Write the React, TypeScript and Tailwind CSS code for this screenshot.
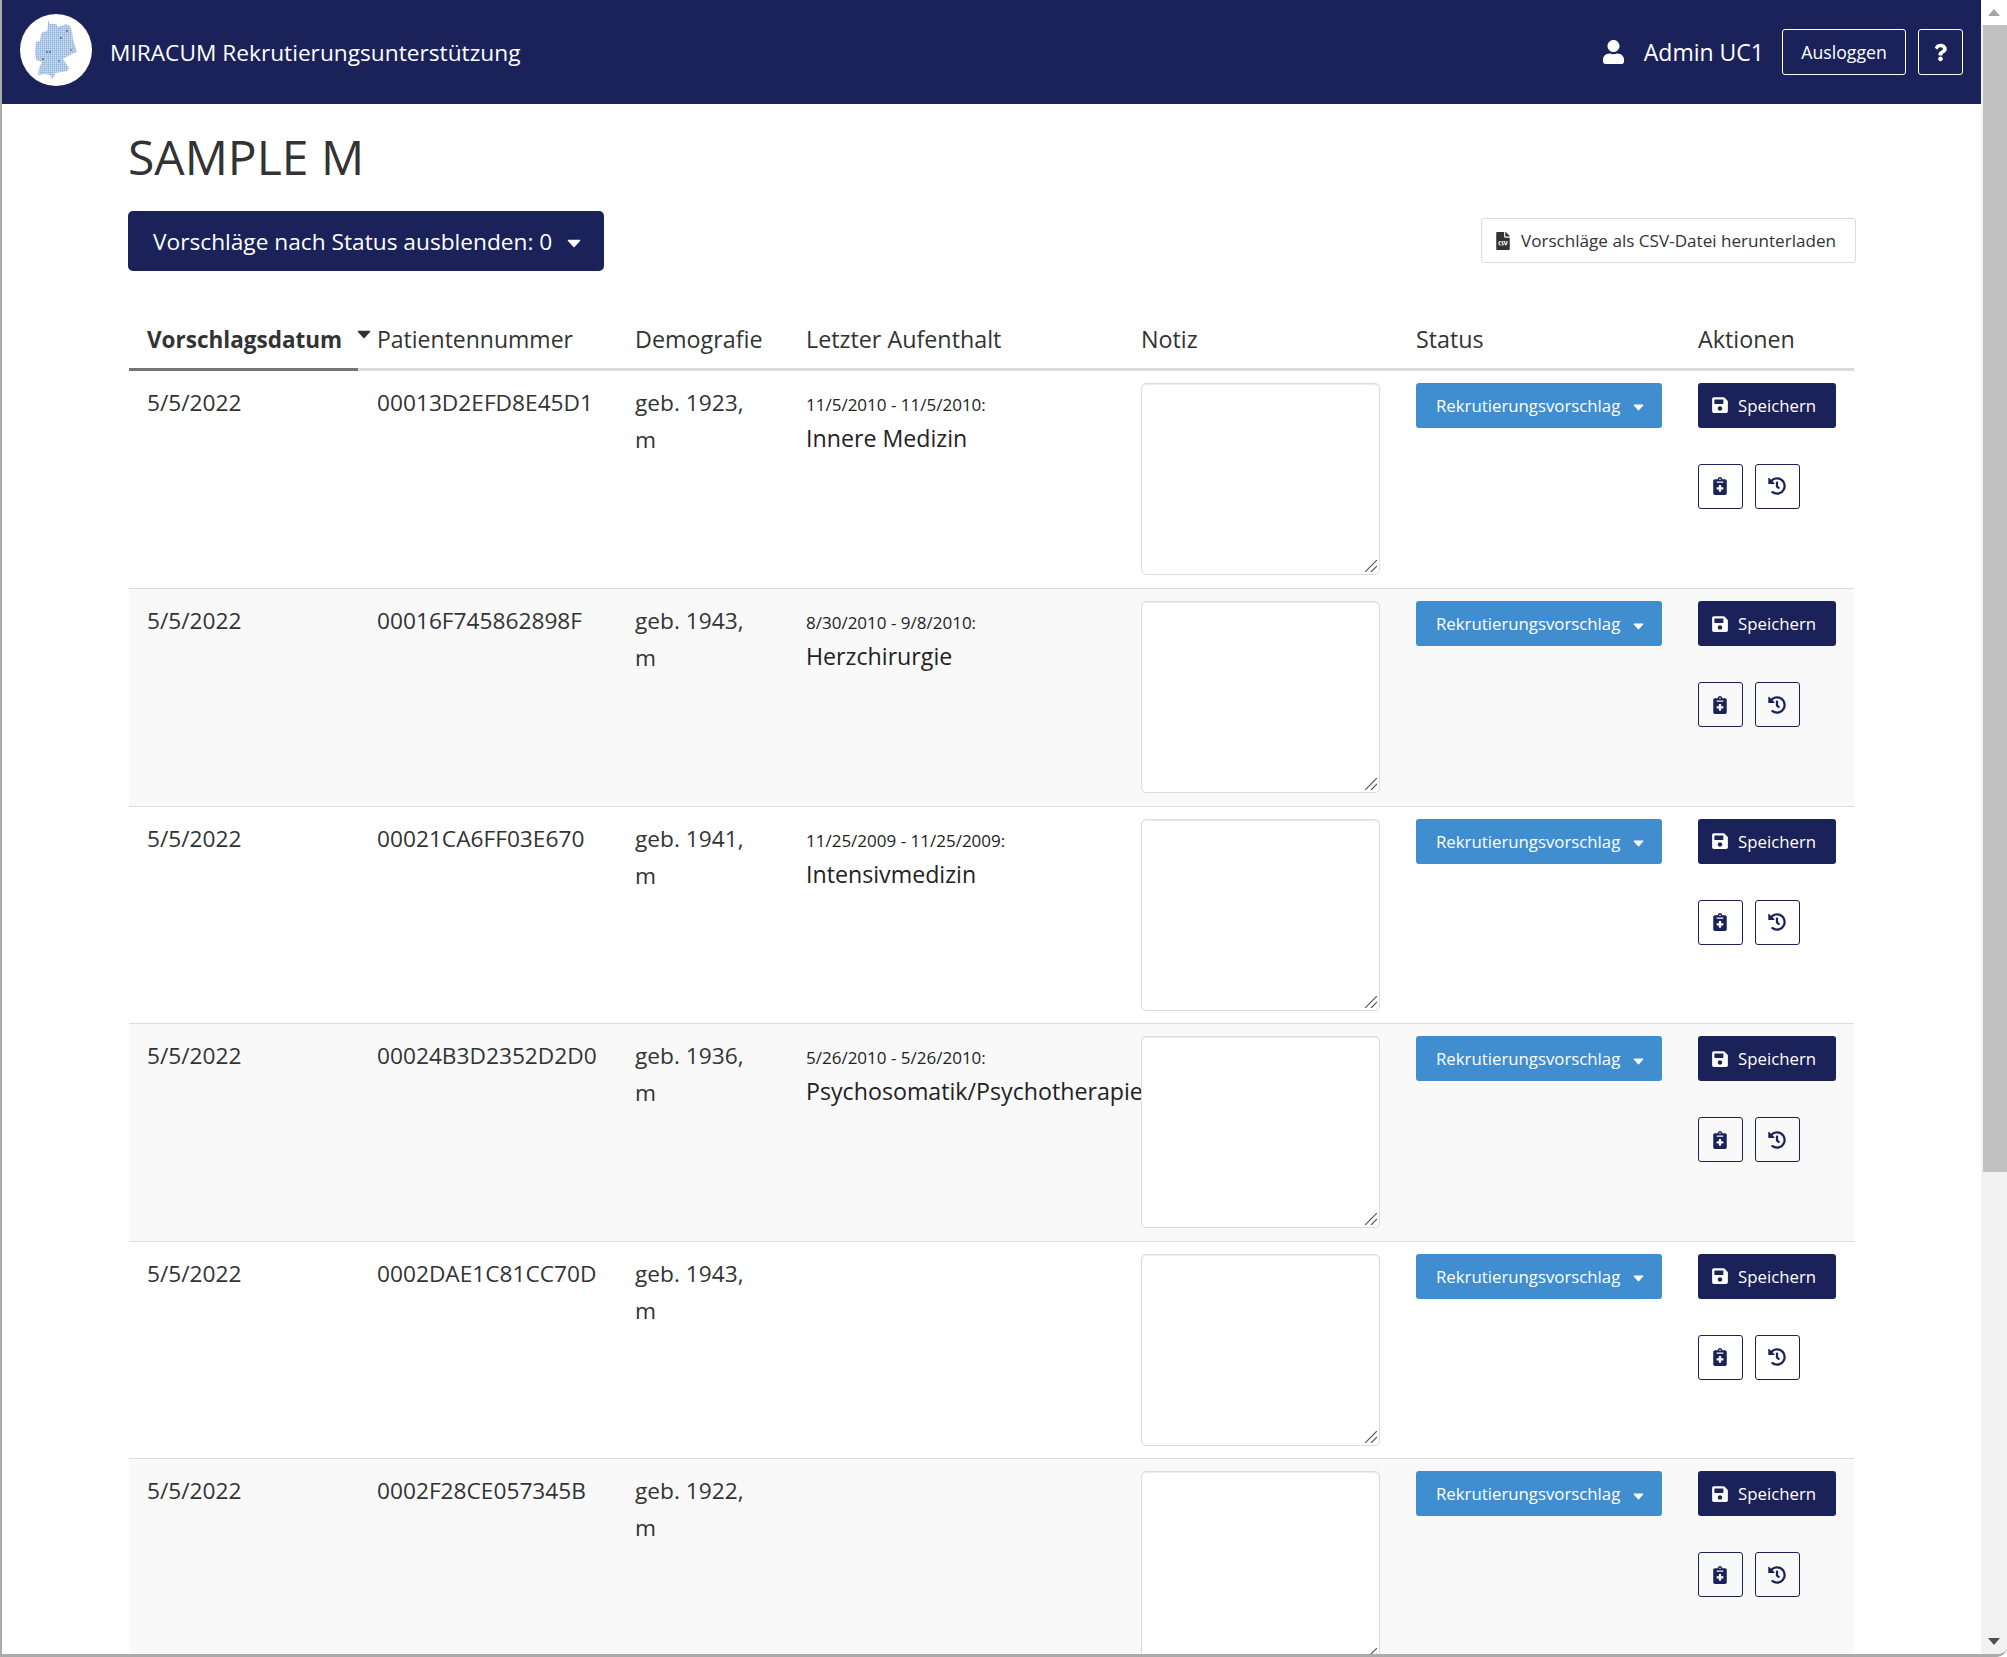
import { FaFileCsv, FaHistory, FaNotesMedical, FaQuestion, FaSave, FaUser } from "react-icons/fa";

interface Proposal {
  id: string;
  born: number;
  stayDate?: string;
  ward?: string;
}

const proposals: Proposal[] = [
  { id: "00013D2EFD8E45D1", born: 1923, stayDate: "11/5/2010 - 11/5/2010:", ward: "Innere Medizin" },
  { id: "00016F745862898F", born: 1943, stayDate: "8/30/2010 - 9/8/2010:", ward: "Herzchirurgie" },
  { id: "00021CA6FF03E670", born: 1941, stayDate: "11/25/2009 - 11/25/2009:", ward: "Intensivmedizin" },
  { id: "00024B3D2352D2D0", born: 1936, stayDate: "5/26/2010 - 5/26/2010:", ward: "Psychosomatik/Psychotherapie" },
  { id: "0002DAE1C81CC70D", born: 1943 },
  { id: "0002F28CE057345B", born: 1922 },
];

function Caret({ className }: { className: string }) {
  return (
    <svg viewBox="0 0 14 9" className={className} fill="currentColor" stroke="currentColor" strokeWidth="1.5" strokeLinejoin="round">
      <path d="M1.5 1.5 H12.5 L7 7.5 Z" />
    </svg>
  );
}

function Logo() {
  return (
    <div className="w-[72px] h-[72px] rounded-full bg-white shrink-0 -mt-[5px]">
      <svg viewBox="0 0 72 72" className="w-[72px] h-[72px]">
        <defs>
          <pattern id="cells" width="2" height="2" patternUnits="userSpaceOnUse">
            <rect width="1.7" height="1.7" fill="#93b4da" />
          </pattern>
        </defs>
        <polygon
          fill="url(#cells)"
          points="28,6 30,10 36,10 38,13 44,11 46,10 50,12 52,17 53,26 55,32 57,38 52,40 46,43 43,45 47,51 49,54 47,57 42,58 35,59 34,63 32,65 30,61 24,60 18,61 19,54 22,48 16,46 15,38 16,28 20,27 21,20 23,18 27,17 28,11"
        />
        <circle cx="41" cy="24" r="0.9" fill="#5a5a70" />
        <circle cx="27" cy="38" r="0.9" fill="#5a5a70" />
        <circle cx="30" cy="38" r="0.9" fill="#5a5a70" />
        <circle cx="23" cy="45" r="0.9" fill="#5a5a70" />
        <circle cx="39" cy="47" r="0.9" fill="#7a7a8a" />
        <circle cx="51" cy="36" r="0.9" fill="#7a7a8a" />
        <circle cx="47" cy="17" r="0.9" fill="#5a5a70" />
      </svg>
    </div>
  );
}

function Header() {
  return (
    <header className="h-[104px] bg-[#1b2259] text-white flex items-center pl-[18px] pr-[18px]">
      <Logo />
      <span className="ml-[18px] text-[22.7px] mt-[1px]">MIRACUM Rekrutierungsunterstützung</span>
      <div className="ml-auto flex items-center">
        <FaUser className="w-[21px] h-[24px]" />
        <span className="ml-[20px] text-[23px]">Admin UC1</span>
        <button className="ml-[18px] w-[124px] h-[46px] border border-white rounded-[3px] text-[17.7px]">Ausloggen</button>
        <button className="ml-[12px] w-[45px] h-[46px] border border-white rounded-[3px] flex items-center justify-center">
          <FaQuestion className="w-[13px] h-[19px]" />
        </button>
      </div>
    </header>
  );
}

function ProposalRow({ proposal, striped }: { proposal: Proposal; striped: boolean }) {
  return (
    <tr className={`h-[217.5px] first:h-[219.5px] border-b border-[#dcdcdc] align-top ${striped ? "bg-[#f9f9f9]" : "bg-white"}`}>
      <td className="pl-[18px] pt-[13px]">5/5/2022</td>
      <td className="pl-[19px] pt-[13px]">{proposal.id}</td>
      <td className="pl-[19px] pt-[13px]">
        geb. {proposal.born},<br />m
      </td>
      <td className="pl-[19px] pt-[15px]">
        {proposal.stayDate && (
          <>
            <div className="text-[17px] h-[34px] leading-[37px] whitespace-nowrap text-[#222]">{proposal.stayDate}</div>
            <div className="whitespace-nowrap text-[#222] font-medium text-[23.2px]">{proposal.ward}</div>
          </>
        )}
      </td>
      <td className="pl-[18px] pt-[12px]">
        <div className="relative w-[239px] h-[192px]">
          <textarea className="block w-full h-full resize-none bg-white border border-[#dcdcdc] rounded-[5px] shadow-[inset_0_1px_1px_rgba(0,0,0,0.075)]" />
          {/* windows style resize grip */}
          <svg viewBox="0 0 12 12" className="absolute right-[3px] bottom-[3px] w-[12px] h-[12px] pointer-events-none" stroke="#555" strokeWidth="1.2">
            <path d="M0 12 L12 0 M6 12 L12 6" />
          </svg>
        </div>
      </td>
      <td className="pl-[19px] pt-[12px]">
        <button className="w-[246px] h-[45px] bg-[#408ed0] text-white rounded-[3px] text-[16.8px] flex items-center pl-[20px]">
          Rekrutierungsvorschlag
          <Caret className="ml-[13px] mt-[5px] w-[11px] h-[7px]" />
        </button>
      </td>
      <td className="pl-[19px] pt-[12px]">
        <button className="w-[138px] h-[45px] bg-[#1b2259] text-white rounded-[3px] text-[16.8px] flex items-center pl-[14px]">
          <FaSave className="w-[16px] h-[18px] mr-[10px]" />
          Speichern
        </button>
        <div className="flex gap-[12px] mt-[36px]">
          <button className="w-[45px] h-[45px] border border-[#1b2259] rounded-[3px] flex items-center justify-center text-[#1b2259] pr-[1px]">
            <FaNotesMedical className="w-[14px] h-[18px]" />
          </button>
          <button className="w-[45px] h-[45px] border border-[#1b2259] rounded-[3px] flex items-center justify-center text-[#1b2259] pr-[1px]">
            <FaHistory className="w-[18px] h-[18px]" />
          </button>
        </div>
      </td>
    </tr>
  );
}

function Scrollbar() {
  return (
    <div className="w-[26px] shrink-0 bg-[#f1f1f1] flex flex-col">
      <div className="h-[25px] bg-white flex items-center justify-center">
        <div className="w-0 h-0 border-x-[6px] border-x-transparent border-b-[7px] border-b-[#a3a3a3]" />
      </div>
      <div className="h-[1147px] ml-[2px] bg-[#c1c1c1]" />
      <div className="flex-1" />
      <div className="h-[25px] flex items-center justify-center">
        <div className="w-0 h-0 border-x-[6px] border-x-transparent border-t-[7px] border-t-[#505050]" />
      </div>
    </div>
  );
}

export default function App() {
  return (
    <div
      className="h-[1657px] overflow-hidden flex bg-white border-l-2 border-b-[3px] border-[#ababab] rounded-br-[10px] text-[#333] text-[22.7px] leading-[37px]"
      style={{ fontFamily: '"Open Sans", "Noto Sans", sans-serif' }}
    >
      <div className="flex-1 min-w-0">
        <Header />
        <main className="pl-[126px] pr-[126px]">
          <h1 className="text-[48px] leading-[54px] mt-[26px] text-[#333] font-medium">SAMPLE M</h1>
          <div className="flex items-center justify-between mt-[27px] -mr-[1px]">
            <button className="w-[476px] h-[60px] shrink-0 whitespace-nowrap bg-[#1b2259] text-white rounded-[5px] flex items-center pl-[25px] text-[22.7px]">
              Vorschläge nach Status ausblenden: 0
              <Caret className="ml-[15px] mt-[5px] w-[14px] h-[9px]" />
            </button>
            <button className="w-[375px] h-[45px] shrink-0 border border-[#dcdcdc] rounded-[3px] text-[17.1px] flex items-center pl-[14px] mt-[-1px]">
              <FaFileCsv className="w-[14px] h-[18px] mr-[11px]" />
              Vorschläge als CSV-Datei herunterladen
            </button>
          </div>
          <table className="table-fixed w-[1725px] ml-[1px] mt-[39px] border-collapse">
            <thead>
              <tr className="h-[59px] text-left border-b-[3px] border-[#dcdcdc] text-[23.3px]">
                <th className="w-[229px] pl-[18px] pt-[2px] font-bold text-[22.5px] relative border-b-[3px] border-[#757575] whitespace-nowrap">
                  Vorschlagsdatum
                  <Caret className="absolute right-[-13px] top-[20px] w-[14px] h-[9px] text-[#333]" />
                </th>
                <th className="w-[258px] pl-[19px] pt-[2px] font-normal text-[23px]">Patientennummer</th>
                <th className="w-[171px] pl-[19px] pt-[2px] font-normal">Demografie</th>
                <th className="w-[336px] pl-[19px] pt-[2px] font-normal">Letzter Aufenthalt</th>
                <th className="w-[274px] pl-[18px] pt-[2px] font-normal">Notiz</th>
                <th className="w-[282px] pl-[19px] pt-[2px] font-normal">Status</th>
                <th className="w-[175px] pl-[19px] pt-[2px] font-normal">Aktionen</th>
              </tr>
            </thead>
            <tbody>
              {proposals.map((p, i) => (
                <ProposalRow key={p.id} proposal={p} striped={i % 2 === 1} />
              ))}
            </tbody>
          </table>
        </main>
      </div>
      <Scrollbar />
    </div>
  );
}
